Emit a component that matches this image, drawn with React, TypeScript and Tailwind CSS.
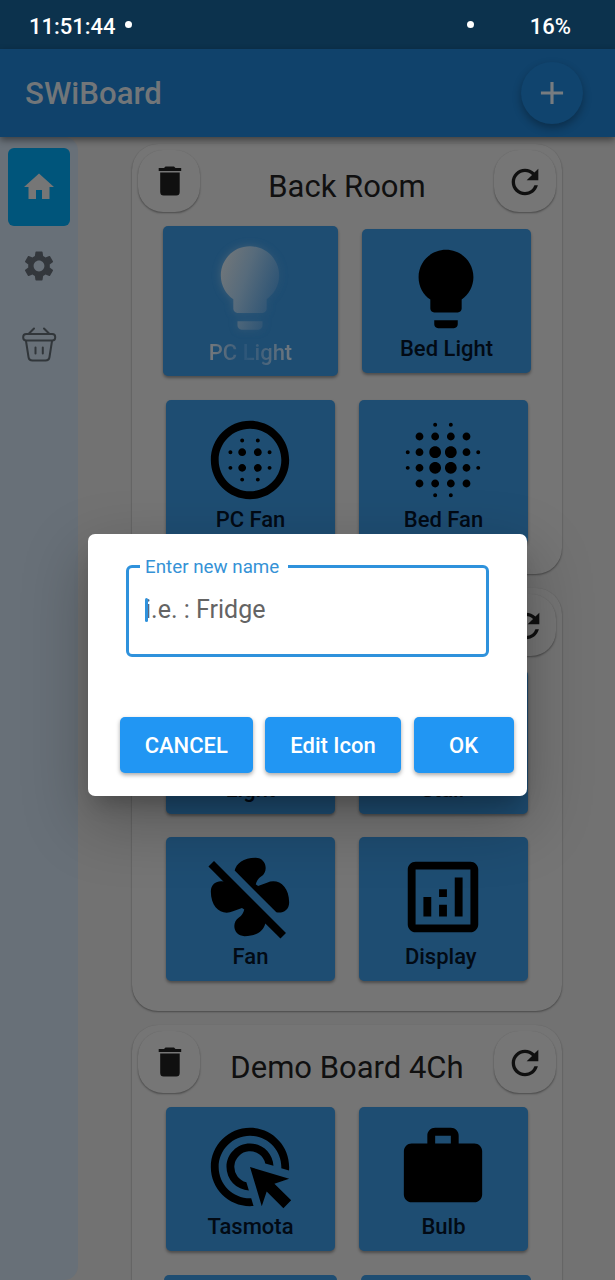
import React from "react";
import {
  MdAdd,
  MdAdsClick,
  MdBlurCircular,
  MdBlurOn,
  MdHome,
  MdModeFanOff,
  MdOutlineAnalytics,
  MdRefresh,
  MdSettings,
  MdWork,
} from "react-icons/md";

const BULB =
  "M9 21c0 .5.4 1 1 1h4c.6 0 1-.5 1-1v-1H9v1zm3-19C8.1 2 5 5.1 5 9c0 2.4 1.2 4.5 3 5.7V17c0 .5.4 1 1 1h6c.6 0 1-.5 1-1v-2.3c1.8-1.3 3-3.4 3-5.7 0-3.9-3.1-7-7-7z";

function Bulb() {
  return (
    <svg viewBox="0 0 24 24" className="size-[94px]" fill="currentColor">
      <path d={BULB} />
    </svg>
  );
}

function GlowingBulb() {
  return (
    <svg viewBox="0 0 24 24" className="size-[100px] overflow-visible">
      <defs>
        <linearGradient id="bulb" x1="0" y1="0.2" x2="1" y2="0.7">
          <stop offset="0" stopColor="#70767a" />
          <stop offset="0.4" stopColor="#576b7b" />
          <stop offset="0.95" stopColor="#2a5274" />
        </linearGradient>
        <filter id="glow" x="-50%" y="-50%" width="200%" height="200%">
          <feGaussianBlur stdDeviation="1" />
        </filter>
      </defs>
      <path d={BULB} fill="url(#bulb)" filter="url(#glow)" opacity="0.5" />
      <path d={BULB} fill="url(#bulb)" />
    </svg>
  );
}

function TrashIcon() {
  return (
    <svg viewBox="0 0 24 30" className="h-[30px] w-6" fill="currentColor">
      <path d="M0.700 2 H6 L7.500 0.500 H16 L17.500 2 H23.200 V5 H0.700 Z" />
      <path d="M2.200 6.500 H21.700 V26 Q21.700 29.500 18.200 29.500 H5.700 Q2.200 29.500 2.200 26 Z" />
    </svg>
  );
}

function BasketIcon() {
  return (
    <svg viewBox="0 0 36 36" className="size-9" fill="none" stroke="#31363a" strokeWidth="2" strokeLinecap="round" strokeLinejoin="round">
      <path d="M7.500 8 L13 2.500 M28.500 8 L23 2.500" />
      <rect x="2.200" y="8" width="32" height="6.500" rx="3" />
      <path d="M5 15 L7.500 31 Q8 34.500 11.500 34.500 H24.500 Q28 34.500 28.500 31 L31 15" />
      <path d="M14.500 21.500 V27.500 M21.800 21.500 V27.500" />
    </svg>
  );
}

function RoundButton({ children }: { children: React.ReactNode }) {
  return (
    <button className="flex size-[62px] items-center justify-center rounded-[25px] bg-[#767676] text-[#101010] shadow-[0_1.5px_2px_-0.5px_rgba(0,0,0,0.35),0_0_1px_rgba(0,0,0,0.1)]">
      {children}
    </button>
  );
}

function Board({ title, height, rowGap, children }: { title: string; height: string; rowGap: string; children: React.ReactNode }) {
  return (
    <section
      className={
        "flex w-[430px] shrink-0 flex-col rounded-[26px] bg-[#757575] shadow-[0_1.5px_2px_-0.5px_rgba(0,0,0,0.35),0_0_1px_rgba(0,0,0,0.15)] " + height
      }
    >
      <header className="flex h-[82px] shrink-0 justify-between px-1.5 pt-1.5">
        <RoundButton>
          <div className="pl-0.5">
            <TrashIcon />
          </div>
        </RoundButton>
        <h2 className="pt-[19px] text-[31px] leading-[36px] text-[#101010]">{title}</h2>
        <RoundButton>
          <MdRefresh className="mt-0.5 ml-px size-[40px]" />
        </RoundButton>
      </header>
      <div className={"flex flex-col " + rowGap}>{children}</div>
    </section>
  );
}

function Row({ children }: { children: React.ReactNode }) {
  return <div className="flex items-center justify-center gap-6">{children}</div>;
}

function Tile({ label, children }: { label: string; children: React.ReactNode }) {
  return (
    <button className="flex h-36 w-[169px] flex-col items-center rounded-[5px] bg-[#1e4d72] pt-[13px] text-black shadow-[0_2px_3px_rgba(0,0,0,0.35)]">
      <div className="-ml-px">{children}</div>
      <span className="text-[22px] leading-[26px] font-medium whitespace-pre text-[#020a14]">{label}</span>
    </button>
  );
}

function ActiveTile() {
  return (
    <button className="flex h-[150px] w-[175px] flex-col items-center rounded-[5px] bg-[#1e4d72] pt-3 shadow-[0_2px_3px_rgba(0,0,0,0.35)]">
      <div className="-ml-px">
        <GlowingBulb />
      </div>
      <span className="mt-px bg-linear-to-r from-[#77797b] via-[#2c5679] via-45% to-[#71787e] bg-clip-text text-[22px] leading-[28px] font-medium text-transparent">
        PC Light
      </span>
    </button>
  );
}

function DialogButton({ className, children }: { className: string; children: React.ReactNode }) {
  return (
    <button className={"h-14 rounded-[5px] bg-[#2196f3] text-[22px] font-medium text-white shadow-[0_2px_4px_rgba(0,0,0,0.35)] " + className}>
      {children}
    </button>
  );
}

function RenameDialog() {
  return (
    <div className="absolute top-[534px] left-[88px] flex h-[261.5px] w-[439px] flex-col rounded-[7px] bg-white pt-[31px] shadow-[0_24px_64px_4px_rgba(0,0,0,0.24),0_14px_20px_-8px_rgba(0,0,0,0.22)]">
      <fieldset className="relative mx-[38px] h-[92px] rounded-[6px] border-3 border-[#2f92dc]">
        <label className="absolute -top-[14px] left-[11px] w-[148px] bg-white pt-px pl-[5px] text-[18.8px] leading-6 text-[#3592d6]">
          Enter new name
        </label>
        <div className="flex items-center pt-[27px] pl-4">
          <span className="relative text-[25px] leading-[30px] text-[#646464]">
            i.e. : Fridge
            <span className="absolute top-[3px] left-0 h-6 w-[3px] rounded-sm bg-[#2f92dc]" />
          </span>
        </div>
      </fieldset>
      <div className="mt-[60px] flex gap-[12.5px] pl-8">
        <DialogButton className="w-[132.5px]">CANCEL</DialogButton>
        <DialogButton className="w-[136px]">Edit Icon</DialogButton>
        <DialogButton className="w-[100px]">OK</DialogButton>
      </div>
    </div>
  );
}

export default function App() {
  return (
    <div className="relative flex h-[1280px] w-[615px] flex-col overflow-hidden bg-[#727272] font-[Roboto,sans-serif]">
      <div className="flex h-[49px] shrink-0 items-center bg-[#0c324d] pt-[3px] pr-11 pl-[29px] text-[22px] font-medium text-white">
        <span>11:51:44</span>
        <span className="mb-[3px] ml-[9px] size-[7px] rounded-full bg-white" />
        <span className="mr-[56px] mb-[3px] ml-auto size-[7px] rounded-full bg-white" />
        <span>16%</span>
      </div>
      <div className="z-10 flex h-[88px] shrink-0 items-center justify-between bg-[#10426b] pr-8 pl-[25px] shadow-[0_3px_7px_rgba(0,0,0,0.45)]">
        <h1 className="pt-0.5 text-[31.2px] font-medium text-[#727679]">SWiBoard</h1>
        <button className="flex size-[62px] items-center justify-center rounded-full bg-[#10446e] text-[#777c80] shadow-[0_4px_9px_rgba(0,0,0,0.3)]">
          <MdAdd className="size-[38px]" />
        </button>
      </div>
      <div className="flex min-h-0 flex-1">
        <nav className="flex w-[78px] shrink-0 flex-col items-center rounded-r-[14px] bg-[#687078] pt-[11px]">
          <div className="flex h-[78px] w-[62px] items-center justify-center rounded-[6px] bg-[#00557b] text-[#767676]">
            <MdHome className="size-9" />
          </div>
          <MdSettings className="mt-[22px] size-9 text-[#33373c]" />
          <div className="mt-[42px]">
            <BasketIcon />
          </div>
        </nav>
        <main className="flex flex-1 flex-col gap-[13.5px] overflow-hidden pt-[7px] pl-[54px]">
          <Board title="Back Room" height="h-[430px]" rowGap="gap-6">
            <Row>
              <ActiveTile />
              <Tile label="Bed Light">
                <Bulb />
              </Tile>
            </Row>
            <Row>
              <Tile label="PC Fan">
                <MdBlurCircular className="size-[94px]" />
              </Tile>
              <Tile label="Bed Fan">
                <MdBlurOn className="size-[94px]" />
              </Tile>
            </Row>
          </Board>
          <Board title="Living Room" height="h-[423.5px]" rowGap="gap-[23.5px]">
            <Row>
              <Tile label="Light">
                <Bulb />
              </Tile>
              <Tile label="Stair">
                <Bulb />
              </Tile>
            </Row>
            <Row>
              <Tile label="Fan">
                <MdModeFanOff className="size-[94px]" />
              </Tile>
              <Tile label="Display ">
                <MdOutlineAnalytics className="size-[94px]" />
              </Tile>
            </Row>
          </Board>
          <Board title="Demo Board 4Ch" height="h-[430px]" rowGap="gap-6">
            <Row>
              <Tile label="Tasmota">
                <MdAdsClick className="size-[94px]" />
              </Tile>
              <Tile label="Bulb">
                <MdWork className="size-[94px]" />
              </Tile>
            </Row>
            <Row>
              <div className="h-[148px] w-[173px] rounded-[5px] bg-[#1e4d72]" />
              <div className="h-[148px] w-[170px] rounded-[5px] bg-[#1e4d72]" />
            </Row>
          </Board>
        </main>
      </div>
      <RenameDialog />
    </div>
  );
}
